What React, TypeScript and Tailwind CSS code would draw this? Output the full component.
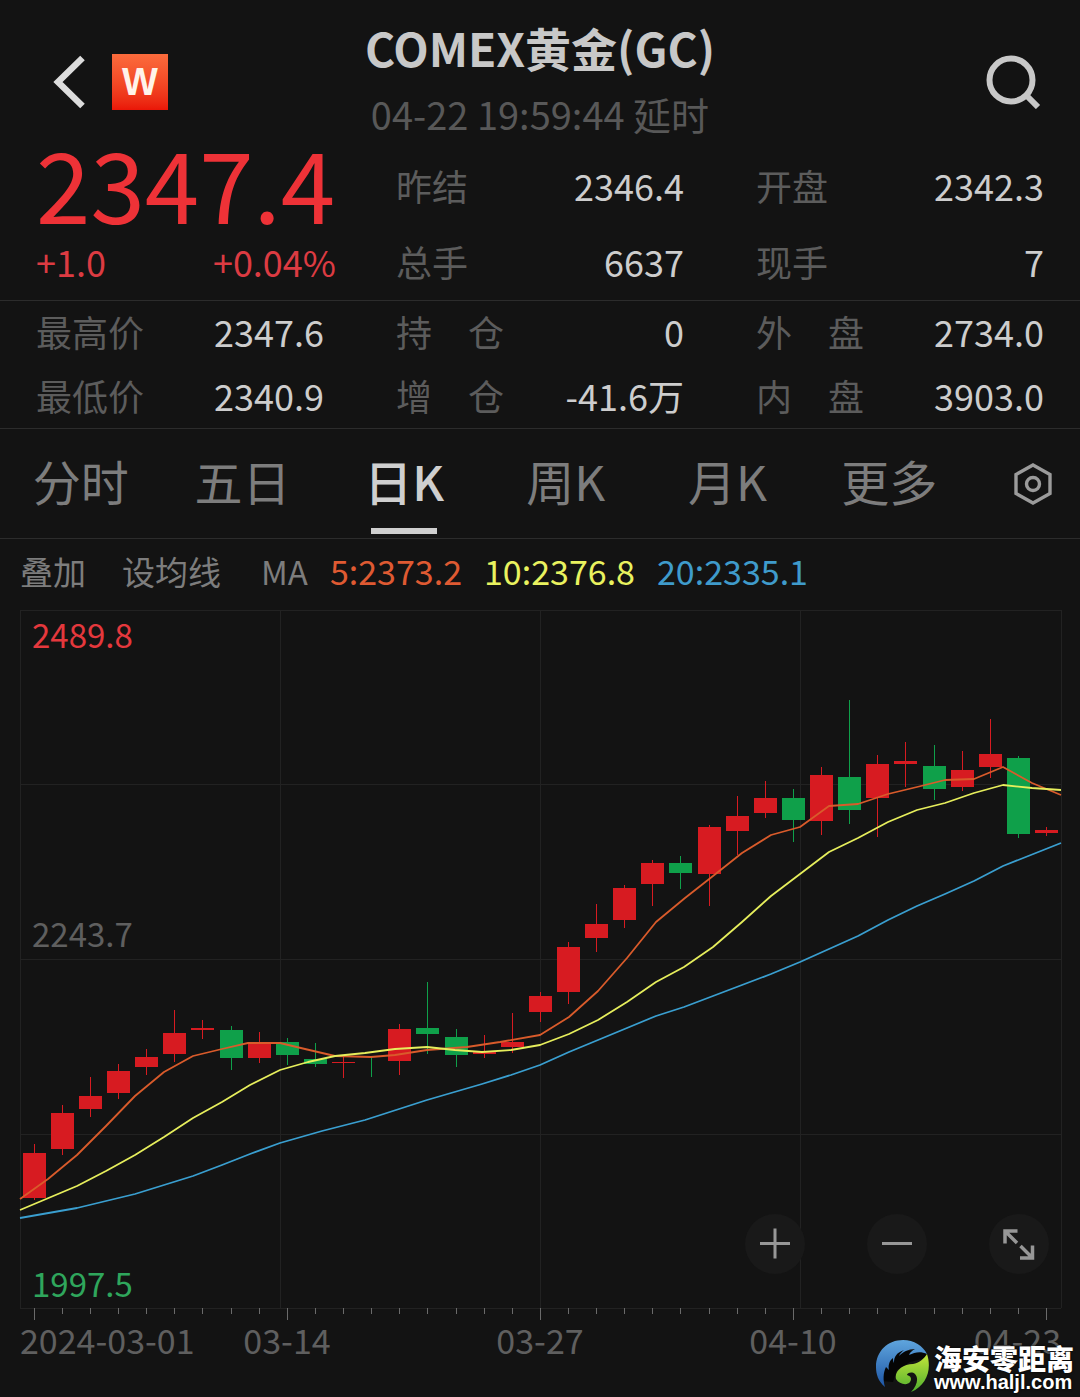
import type { FC } from "react";
import React, { useState } from "react";

type Quote = { label: string; value: string };
type Candle = [high: number, top: number, bottom: number, low: number, rising: 0 | 1];

const TOP_QUOTES: Quote[][] = [
  [
    { label: "昨结", value: "2346.4" },
    { label: "总手", value: "6637" },
  ],
  [
    { label: "开盘", value: "2342.3" },
    { label: "现手", value: "7" },
  ],
];

const DETAIL_QUOTES: Quote[][] = [
  [
    { label: "最高价", value: "2347.6" },
    { label: "最低价", value: "2340.9" },
  ],
  [
    { label: "持　仓", value: "0" },
    { label: "增　仓", value: "-41.6万" },
  ],
  [
    { label: "外　盘", value: "2734.0" },
    { label: "内　盘", value: "3903.0" },
  ],
];

const TABS = ["分时", "五日", "日K", "周K", "月K", "更多"];

// y is measured in the chart's own units, 0 at the top of the plot
const CANDLES: Candle[] = [
  [534, 543, 588, 590, 1],
  [495, 503, 539, 545, 1],
  [467, 486, 499, 507, 1],
  [454, 461, 483, 489, 1],
  [439, 447, 457, 465, 1],
  [400, 423, 444, 452, 1],
  [410, 418, 420, 429, 1],
  [416, 420, 448, 460, 0],
  [422, 433, 448, 453, 1],
  [428, 432, 445, 455, 0],
  [433, 449, 454, 457, 0],
  [445, 452, 453, 468, 1],
  [446, 446, 447, 467, 0],
  [414, 419, 451, 465, 1],
  [372, 418, 424, 444, 0],
  [419, 427, 445, 457, 0],
  [425, 441, 444, 448, 1],
  [403, 432, 437, 443, 1],
  [382, 386, 402, 412, 1],
  [332, 337, 382, 394, 1],
  [294, 314, 328, 342, 1],
  [275, 278, 310, 318, 1],
  [250, 253, 274, 296, 1],
  [246, 253, 263, 279, 0],
  [215, 217, 264, 296, 1],
  [186, 206, 221, 245, 1],
  [171, 188, 203, 208, 1],
  [179, 188, 210, 232, 0],
  [157, 165, 211, 225, 1],
  [90, 167, 200, 214, 0],
  [145, 154, 188, 227, 1],
  [132, 151, 154, 177, 1],
  [135, 156, 179, 190, 0],
  [141, 160, 177, 181, 1],
  [109, 144, 157, 168, 1],
  [146, 148, 224, 228, 0],
  [217, 220, 223, 226, 1],
];

const MA_LINES = [
  {
    color: "#d95b2b",
    points:
      "20,589 48,569 77,545 106,516 135,486 164,462 193,446 222,439 248,433 280,433 305,439 335,446 371,447 395,445 427,440 467,437 500,432 540,425 569,407 598,381 627,348 656,312 685,288 713,266 742,243 771,225 800,217 829,196 858,194 888,184 917,177 945,170 974,169 1003,157 1032,173 1061,185",
  },
  {
    color: "#e6ee5c",
    points:
      "20,600 77,576 106,561 135,545 164,527 193,508 222,492 250,475 280,460 308,452 335,446 365,443 395,439 427,437 455,440 482,442 511,440 540,435 569,424 598,410 627,392 656,372 684,357 713,337 742,312 771,286 800,264 829,242 858,228 888,212 917,200 945,193 974,183 1003,175 1032,178 1061,180",
  },
  {
    color: "#3a9fd0",
    points:
      "20,608 77,598 135,584 193,566 222,555 250,544 280,533 322,521 365,510 427,490 482,474 511,465 540,455 569,442 598,430 627,418 656,406 684,397 713,386 742,375 771,364 800,352 829,339 858,326 888,310 917,296 945,284 974,271 1003,256 1061,233",
  },
];

const DATE_LABELS = [
  { x: 20, text: "2024-03-01", anchor: "start" as const },
  { x: 287, text: "03-14", anchor: "middle" as const },
  { x: 540, text: "03-27", anchor: "middle" as const },
  { x: 793, text: "04-10", anchor: "middle" as const },
  { x: 1061, text: "04-23", anchor: "end" as const },
];

const candleX = (i: number) => Math.round(33.7 + i * 28.12);

const QuoteColumn: FC<{ quotes: Quote[]; className: string }> = ({ quotes, className }) => (
  <dl className={className}>
    {quotes.map((q) => (
      <div key={q.label} className="flex justify-between whitespace-nowrap">
        <dt className="text-[#5c5c5c]">{q.label}</dt>
        <dd className="text-[#cdcdcd]">{q.value}</dd>
      </div>
    ))}
  </dl>
);

const Header: FC = () => (
  <header className="grid grid-cols-[1fr_auto_1fr] items-center px-[38px] pt-[14px]">
    <div className="flex items-center gap-[26px] pt-0.5 pl-[14px]">
      <button type="button" aria-label="返回">
        <svg width="34" height="54" viewBox="0 0 34 54" fill="none" stroke="#dcdcdc" strokeWidth="6.5">
          <path d="M30.5 3 6 27 30.5 51" />
        </svg>
      </button>
      <span className="flex size-14 items-center justify-center bg-linear-to-b from-[#fb6b3c] to-[#ea1507] font-['Liberation_Sans',sans-serif] text-[38px] leading-none font-bold text-[#fff3ea]">
        W
      </span>
    </div>
    <div className="text-center">
      <h1 className="text-[46px] leading-[66px] font-bold text-[#c8c8c8]">COMEX黄金(GC)</h1>
      <p className="text-[38px] leading-[67px] text-[#585858]">04-22 19:59:44 延时</p>
    </div>
    <button type="button" aria-label="搜索" className="justify-self-end pt-0.5">
      <svg width="56" height="54" viewBox="0 0 56 54" fill="none" stroke="#c8c8c8" strokeWidth="6">
        <circle cx="25" cy="25" r="21.5" />
        <path d="M40 40 52 52" />
      </svg>
    </button>
  </header>
);

const Summary: FC = () => (
  <section className="grid grid-cols-3 gap-x-[72px] border-b border-[#2c2c2c] px-9 pb-px text-4xl">
    <div className="-mr-3 whitespace-nowrap">
      <p className="text-[98px] leading-[68px] text-[#ee3237]">2347.4</p>
      <p className="mt-2 flex justify-between leading-[76px] text-[#dc3b42]">
        <span>+1.0</span>
        <span>+0.04%</span>
      </p>
    </div>
    {TOP_QUOTES.map((quotes, i) => (
      <QuoteColumn key={i} quotes={quotes} className="leading-[76px]" />
    ))}
  </section>
);

const Details: FC = () => (
  <section className="grid grid-cols-3 gap-x-[72px] border-b border-[#2c2c2c] px-9 pb-[3px] text-4xl">
    {DETAIL_QUOTES.map((quotes, i) => (
      <QuoteColumn key={i} quotes={quotes} className="flex flex-col gap-1 leading-[60px]" />
    ))}
  </section>
);

const PeriodTabs: FC = () => {
  const [active, setActive] = useState("日K");
  return (
    <nav className="flex border-b border-[#2c2c2c]">
      {TABS.map((tab) => (
        <button
          key={tab}
          type="button"
          onClick={() => setActive(tab)}
          className={`flex flex-1 flex-col items-center pb-1 text-5xl ${
            tab === active ? "font-medium text-[#cfcfcf]" : "text-[#7d7d7d]"
          }`}
        >
          <span className="-mb-1 leading-[103px]">{tab}</span>
          <span className={`h-1.5 w-[66px] ${tab === active ? "bg-[#cfcfcf]" : ""}`} />
        </button>
      ))}
      <button type="button" aria-label="设置" className="flex w-[110px] items-center justify-center pl-4">
        <svg width="40" height="44" viewBox="0 0 40 44" fill="none" stroke="#9b9b9b" strokeWidth="3.4">
          <path d="M20 3 37 12.5V31.5L20 41 3 31.5V12.5Z" />
          <circle cx="20" cy="22" r="6.5" />
        </svg>
      </button>
    </nav>
  );
};

const Averages: FC = () => (
  <div className="flex items-center gap-9 px-5 text-[33px] leading-[64px] whitespace-nowrap text-[#7d7d7d]">
    <button type="button">叠加</button>
    <button type="button">设均线</button>
    <p className="flex gap-[22px] pl-1">
      <span>MA</span>
      <span className="text-[34px] text-[#df5a32]">5:2373.2</span>
      <span className="text-[34px] text-[#e9f25f]">10:2376.8</span>
      <span className="text-[34px] text-[#3f9bcb]">20:2335.1</span>
    </p>
  </div>
);

const CandleChart: FC = () => (
  <svg viewBox="0 -7 1080 794" className="block w-full" role="img" aria-label="日K线">
    {/* Grid */}
    <g stroke="#222222" strokeWidth="1" shapeRendering="crispEdges">
      {[20, 280, 540, 800, 1061].map((x) => (
        <line key={x} x1={x} x2={x} y1="0" y2="698" />
      ))}
      {[0, 174, 349, 524, 698].map((y) => (
        <line key={y} x1="20" x2="1061" y1={y} y2={y} />
      ))}
    </g>

    {/* Ticks */}
    <g stroke="#6a6a6a" strokeWidth="1" shapeRendering="crispEdges">
      {CANDLES.map((_, i) => (
        <line key={i} x1={candleX(i)} x2={candleX(i)} y1="698" y2={i % 9 === 0 ? 710 : 704} />
      ))}
    </g>

    {/* Candles */}
    {CANDLES.map(([high, top, bottom, low, rising], i) => {
      const x = candleX(i);
      return (
        <g key={i} fill={rising ? "#d71b21" : "#0fa04a"} shapeRendering="crispEdges">
          <rect x={x - 0.4} y={high} width="1" height={low - high} />
          <rect x={x - 11} y={top} width="23" height={bottom - top} />
        </g>
      );
    })}

    {/* Moving averages */}
    {MA_LINES.map((line) => (
      <polyline
        key={line.color}
        points={line.points}
        fill="none"
        stroke={line.color}
        strokeWidth="1.8"
        strokeLinejoin="round"
      />
    ))}

    {/* Axis labels */}
    <g fontSize="33">
      <text x="32" y="38" fill="#e5383d">2489.8</text>
      <text x="32" y="337" fill="#5f5f5f">2243.7</text>
      <text x="32" y="687" fill="#2fa65c">1997.5</text>
    </g>
    <g fontSize="34" fill="#5f5f5f">
      {DATE_LABELS.map((d) => (
        <text key={d.text} x={d.x} y="744" textAnchor={d.anchor}>
          {d.text}
        </text>
      ))}
    </g>
  </svg>
);

const ChartControls: FC = () => (
  <div className="absolute right-[31px] bottom-[123px] flex gap-[62px]">
    <button type="button" aria-label="放大" className="size-[60px] rounded-full bg-[#191919]">
      <svg viewBox="0 0 60 60" fill="none" stroke="#979797" strokeWidth="3">
        <path d="M15 29.5H45M30 14.5V44.5" />
      </svg>
    </button>
    <button type="button" aria-label="缩小" className="size-[60px] rounded-full bg-[#191919]">
      <svg viewBox="0 0 60 60" fill="none" stroke="#979797" strokeWidth="3">
        <path d="M15 29.5H45" />
      </svg>
    </button>
    <button type="button" aria-label="全屏" className="size-[60px] rounded-full bg-[#191919]">
      <svg viewBox="0 0 60 60" fill="none" stroke="#979797" strokeWidth="3.5">
        <path d="M28.5 17H16V29.5M16 17 28 29M43.5 31.5V44H31M43.5 44 31.5 32" />
      </svg>
    </button>
  </div>
);

const SiteMark: FC = () => (
  <div className="absolute right-1.5 bottom-0 flex items-center gap-1 pb-1 font-bold text-white [text-shadow:0_0_3px_#000]">
    <svg width="54" height="54" viewBox="0 0 54 54">
      <defs>
        <linearGradient id="mark-blue" x1="0" y1="0" x2="0" y2="1">
          <stop offset="0" stopColor="#5fa5dd" />
          <stop offset="1" stopColor="#1d55a5" />
        </linearGradient>
        <linearGradient id="mark-green" x1="0" y1="0" x2="0" y2="1">
          <stop offset="0" stopColor="#c3e63a" />
          <stop offset="1" stopColor="#4fae2e" />
        </linearGradient>
      </defs>
      <path d="M6 42 10 24 24 11 50 14 50 19 34 23 21 31 17 43Z" fill="#050505" />
      <path
        d="M9 48C2 42 0 35 0 28C0 12 12 1 27 1C38 1 47 7 51 15C45 12 39 13 33 16C34 13 36 12 39 10C32 10 27 13 23 17C24 14 26 13 28 11C20 14 18 18 18 24C17 22 17 21 17 19C13 22 12 27 13 31L10 28C7 34 7 41 9 48Z"
        fill="url(#mark-blue)"
      />
      <path
        d="M51 15C56 30 51 46 35 53C41 47 43 39 39 35C36 32 31 34 31 36C35 37 36 40 34 43C31 47 23 45 20 40C18 32 27 25 37 25C43 24 48 20 51 15Z"
        fill="url(#mark-green)"
      />
    </svg>
    <div className="pt-1">
      <p className="text-[28px] leading-7 font-black">海安零距离</p>
      <p className="font-['Liberation_Sans',sans-serif] text-xl leading-5">www.haljl.com</p>
    </div>
  </div>
);

const App: FC = () => (
  <main className="min-h-screen bg-[#131313] font-['Noto_Sans_CJK_SC',sans-serif]">
    <Header />
    <Summary />
    <Details />
    <PeriodTabs />
    <Averages />
    <div className="relative">
      <CandleChart />
      <ChartControls />
      <SiteMark />
    </div>
  </main>
);

export default App;
